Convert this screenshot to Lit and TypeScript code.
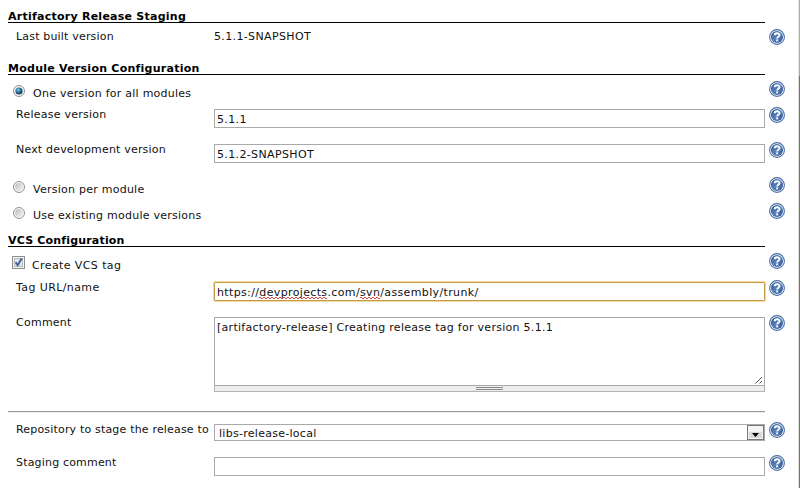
import { LitElement, html, css, svg } from "lit";
import { customElement, property } from "lit/decorators.js";

@customElement("help-icon")
class HelpIcon extends LitElement {
  static styles = css`
    :host { display: block; width: 16px; height: 16px; }
    svg { display: block; }
  `;
  render() {
    return html`<svg width="16" height="16" viewBox="0 0 16 16">
      <defs>
        <linearGradient id="g" x1="0" y1="0" x2="1" y2="1">
          <stop offset="0" stop-color="#27518f" />
          <stop offset="0.5" stop-color="#5a82ba" />
          <stop offset="1" stop-color="#27508e" />
        </linearGradient>
      </defs>
      <circle cx="8" cy="8" r="7.4" fill="#fff" stroke="#4a6fa3" stroke-width="1.1" />
      <circle cx="8" cy="8" r="6.1" fill="url(#g)" />
      <path d="M5.6 6.2C5.7 3.5 10.6 3.5 10.5 6.2C10.4 7.7 8.2 7.7 8.2 9.5" fill="none" stroke="#fff" stroke-width="1.9" />
      <rect x="7.2" y="10.4" width="2" height="2" fill="#fff" />
    </svg>`;
  }
}

@customElement("form-row")
class FormRow extends LitElement {
  @property() label = "";
  static styles = css`
    :host {
      display: grid;
      grid-template-columns: 206px 551px 16px;
      column-gap: 0;
      box-sizing: border-box;
      padding-top: 6px;
    }
    .label { padding-left: 8px; line-height: 16px; white-space: nowrap; }
    .field { min-width: 0; }
    help-icon { margin-left: 4px; }
  `;
  render() {
    return html`
      <div class="label">${this.label}</div>
      <div class="field"><slot></slot></div>
      <help-icon></help-icon>
    `;
  }
}

@customElement("option-row")
class OptionRow extends LitElement {
  @property() kind = "radio";
  @property() label = "";
  @property({ type: Boolean }) checked = false;
  static styles = css`
    :host {
      display: grid;
      grid-template-columns: 757px 16px;
      column-gap: 4px;
      padding-top: 6px;
      box-sizing: border-box;
    }
    .option { display: flex; align-items: flex-start; }
    .radio { margin: 4px 8px 0 5px; }
    .check { margin: 3px 7px 0 4px; }
    .text { margin-top: 5px; line-height: 16px; }
    svg { display: block; flex: none; }
  `;
  render() {
    const radio = html`<svg class="radio" width="12" height="12" viewBox="0 0 12 12">
      <defs>
        <linearGradient id="r" x1="0" y1="0" x2="1" y2="1">
          <stop offset="0" stop-color="#b9bcbf" /><stop offset="1" stop-color="#f4f4f4" />
        </linearGradient>
        <radialGradient id="d" cx="0.4" cy="0.35" r="0.65">
          <stop offset="0" stop-color="#8fd8f2" /><stop offset="0.45" stop-color="#2b7ba6" /><stop offset="1" stop-color="#0c3152" />
        </radialGradient>
      </defs>
      <circle cx="6" cy="6" r="5.5" fill="#f5f5f5" stroke="#929292" />
      ${this.checked
        ? svg`<circle cx="6" cy="6" r="3.6" fill="url(#d)"/>`
        : svg`<circle cx="6" cy="6" r="3.9" fill="url(#r)"/>`}
    </svg>`;
    const check = html`<svg class="check" width="13" height="13" viewBox="0 0 13 13">
      <rect x="0.5" y="0.5" width="12" height="12" fill="#f4f4f4" stroke="#8e8f8f" />
      <rect x="2.5" y="2.5" width="8" height="8" fill="#e1e4e8" stroke="#b6bcc4" />
      <path d="M3.6 6.3L5.7 9.3L9.6 2.6" fill="none" stroke="#435c9c" stroke-width="1.9" />
    </svg>`;
    return html`
      <div class="option">${this.kind === "radio" ? radio : check}<span class="text">${this.label}</span></div>
      <help-icon></help-icon>
    `;
  }
}

@customElement("app-root")
class AppRoot extends LitElement {
  static styles = css`
    :host {
      display: flex;
      justify-content: space-between;
      width: 800px;
      height: 488px;
      overflow: hidden;
      background: #fff;
      color: #111;
      font: 11px "DejaVu Sans", Verdana, sans-serif;
      letter-spacing: 0.25px;
    }
    .form { width: 777px; padding-left: 8px; box-sizing: border-box; }
    .edge { width: 2px; display: flex; flex-direction: column; }
    .edge-top { height: 76px; background: linear-gradient(90deg, #eceae5 50%, #aaa9a4 50%); }
    .edge-rest { flex: 1; background: linear-gradient(90deg, #dcdad2 50%, #74736e 50%); }
    h2 {
      width: 757px;
      height: 23px;
      margin: 0;
      padding-top: 9px;
      box-sizing: border-box;
      border-bottom: 1px solid #000;
      font-size: 11px;
      line-height: 16px;
      color: #000;
    }
    .tight { letter-spacing: 0.18px; }
    .loose { letter-spacing: 0.4px; }
    .h26 { height: 26px; }
    .h27 { height: 27px; }
    .h29 { height: 29px; }
    .h33 { height: 33px; }
    .h35 { height: 35px; }
    .comment { height: 102px; }
    .value { line-height: 16px; letter-spacing: 0.36px; }
    .input {
      height: 19px;
      margin-top: 2px;
      padding: 2px 2px 0;
      box-sizing: border-box;
      border: 1px solid #a9a9a9;
      line-height: 16px;
      letter-spacing: 0.36px;
      white-space: nowrap;
    }
    .focused { border-color: #c99a45; box-shadow: 0 0 0 1px #f1d9a2; border-radius: 1px; }
    .typo {
      background:
        repeating-linear-gradient(90deg, #d44 0 2px, transparent 2px 4px) 0 calc(100% - 1px) / 100% 1px no-repeat,
        repeating-linear-gradient(90deg, transparent 0 2px, #d44 2px 4px) 0 100% / 100% 1px no-repeat;
    }
    .area {
      height: 69px;
      margin-top: 2px;
      padding: 2px;
      box-sizing: border-box;
      border: 1px solid #a9a9a9;
      line-height: 16px;
      letter-spacing: 0.28px;
      display: flex;
      justify-content: space-between;
    }
    .resize { align-self: flex-end; margin: 0 -1px -1px 0; }
    .grip {
      display: flex;
      justify-content: center;
      align-items: center;
      height: 6px;
      border: 1px solid #b5b5b5;
      border-top: 0;
      box-sizing: border-box;
      background: #eee;
    }
    .grip i { width: 27px; height: 3px; box-sizing: border-box; border: solid #888; border-width: 1px 0; }
    .rule { width: 757px; height: 1px; background: #999; border-bottom: 1px solid #eee; margin-bottom: 3px; }
    .select {
      display: flex;
      justify-content: space-between;
      height: 17px;
      margin-top: 2px;
      padding-left: 4px;
      box-sizing: border-box;
      border: 1px solid #a9a9a9;
      line-height: 17px;
      letter-spacing: 0.28px;
    }
    .arrow { display: block; }
  `;
  render() {
    return html`
      <div class="form">
        <h2>Artifactory Release Staging</h2>
        <form-row class="h29 tight" label="Last built version"><div class="value">5.1.1-SNAPSHOT</div></form-row>
        <h2>Module Version Configuration</h2>
        <option-row class="h26" label="One version for all modules" checked></option-row>
        <form-row class="h35" label="Release version"><div class="input">5.1.1</div></form-row>
        <form-row class="h35 tight" label="Next development version"><div class="input">5.1.2-SNAPSHOT</div></form-row>
        <option-row class="h26" label="Version per module"></option-row>
        <option-row class="h27" label="Use existing module versions"></option-row>
        <h2 class="tight">VCS Configuration</h2>
        <option-row class="h27 loose" kind="check" label="Create VCS tag"></option-row>
        <form-row class="h35 loose" label="Tag URL/name"><div class="input focused">https://<span class="typo">devprojects</span>.com/<span class="typo">svn</span>/assembly/trunk/</div></form-row>
        <form-row class="comment" label="Comment">
          <div class="area">
            <span>[artifactory-release] Creating release tag for version 5.1.1</span>
            <svg class="resize" width="8" height="8" viewBox="0 0 8 8"><path d="M0.5 7.5L7 1M4.5 7.5L7 5" stroke="#555" fill="none" /></svg>
          </div>
          <div class="grip"><i></i></div>
        </form-row>
        <div class="rule"></div>
        <form-row class="h33 tight" label="Repository to stage the release to">
          <div class="select">
            <span>libs-release-local</span>
            <svg class="arrow" width="17" height="15" viewBox="0 0 17 15">
              <rect x="0.5" y="0.5" width="16" height="14" fill="#f4f4f4" stroke="#777" />
              <rect x="2" y="7" width="13" height="6" fill="#d8d8d8" />
              <path d="M5 8H12L8.5 12Z" fill="#000" />
            </svg>
          </div>
        </form-row>
        <form-row class="h33 tight" label="Staging comment"><div class="input"></div></form-row>
      </div>
      <div class="edge"><div class="edge-top"></div><div class="edge-rest"></div></div>
    `;
  }
}
